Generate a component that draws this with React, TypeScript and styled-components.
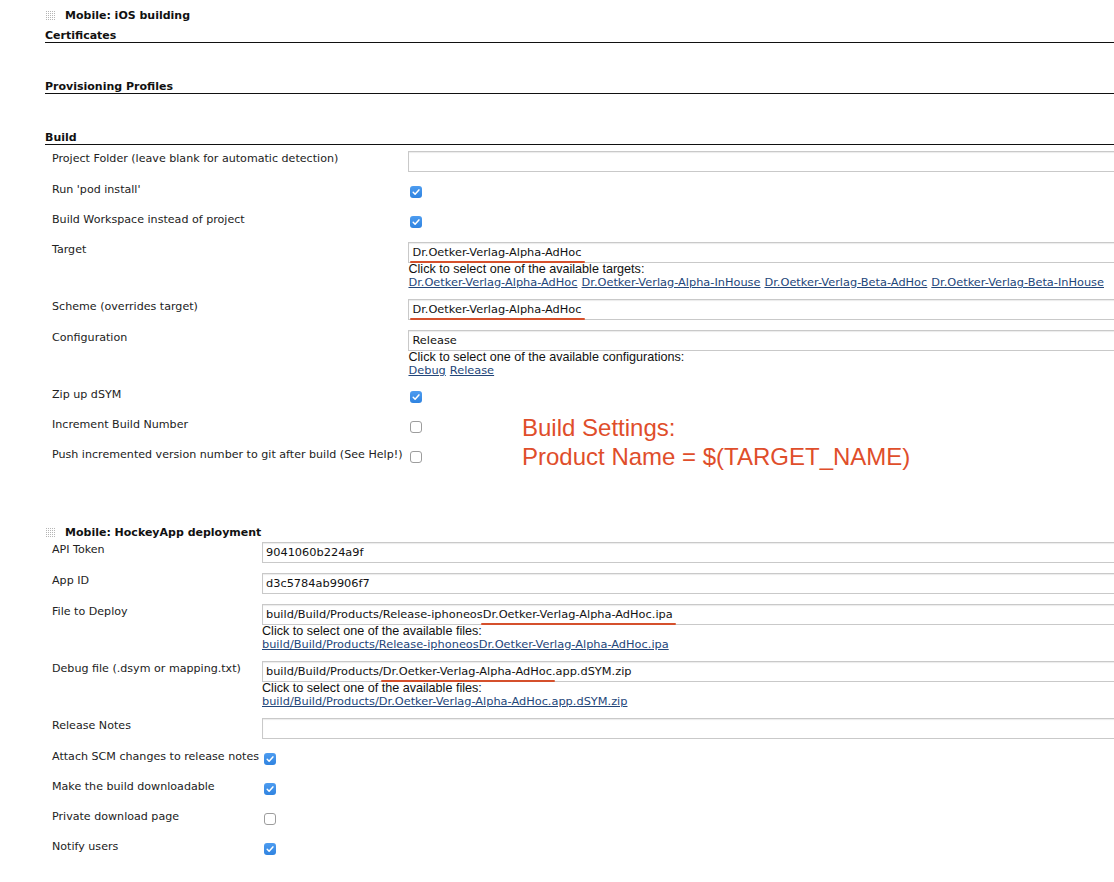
import React from "react";
import styled, { createGlobalStyle } from "styled-components";

const Global = createGlobalStyle`
  html, body { margin: 0; padding: 0; background: #fff; }
  body { overflow: hidden; font-family: "DejaVu Sans", Verdana, sans-serif; color: #222; }
`;

const Page = styled.div`
  position: relative;
  width: 1114px;
  height: 882px;
  overflow: hidden;
  padding: 7px 0 0 45px;
  box-sizing: border-box;
`;

const Section = styled.section<{ $top?: number }>`
  margin-top: ${(p) => p.$top ?? 0}px;
`;

const SectionHeader = styled.div<{ $overlap?: number }>`
  display: flex;
  align-items: center;
  gap: 9px;
  height: 16px;
  margin-bottom: ${(p) => -(p.$overlap ?? 0)}px;
  font-size: 11px;
  font-weight: bold;
  color: #111;
`;

const Grip = styled.svg`
  width: 11px;
  height: 11px;
  flex: none;
`;

const SubHeader = styled.div<{ $gap: number }>`
  margin-top: ${(p) => p.$gap}px;
  height: 13px;
  line-height: 14px;
  font-size: 11px;
  font-weight: bold;
  color: #111;
  border-bottom: 1px solid #111;
`;

const FormGrid = styled.div<{ $gap: number }>`
  display: grid;
  grid-template-columns: max-content 1fr;
  column-gap: ${(p) => p.$gap}px;
  padding-left: 7px;
  margin-top: 1px;
`;

const Label = styled.div`
  padding: 6px 0 10px;
  line-height: 14px;
  font-size: 11.1px;
  color: #222;
  white-space: nowrap;
`;

const Field = styled.div<{ $check?: boolean }>`
  padding: ${(p) => (p.$check ? "9px 0 9px 2px" : "5px 0")};
  min-width: 0;
`;

const TextBox = styled.div`
  box-sizing: border-box;
  width: calc(100% + 20px);
  height: 21px;
  padding: 0 3px;
  line-height: 19px;
  border: 1px solid #c9c9c9;
  box-shadow: inset 0 1px 1px rgba(0, 0, 0, 0.08);
  background: #fff;
  font-size: 11.35px;
  color: #111;
  white-space: nowrap;
`;

const Marked = styled.span`
  position: relative;
  &::after {
    content: "";
    position: absolute;
    left: -2px;
    right: -3px;
    bottom: -4px;
    height: 2px;
    border-radius: 1px;
    background: #d5502c;
  }
`;

const Helper = styled.div`
  font-family: "Liberation Sans", Arial, sans-serif;
  font-size: 12.6px;
  line-height: 13px;
  color: #111;
  white-space: nowrap;
`;

const Links = styled.div`
  display: flex;
  gap: 4px;
  font-size: 11.35px;
  line-height: 13px;
  white-space: nowrap;
`;

const Link = styled.a`
  color: #23467a;
  text-decoration: underline;
  cursor: pointer;
`;

const Box = styled.span<{ $on: boolean }>`
  display: block;
  box-sizing: border-box;
  width: 12px;
  height: 12px;
  border-radius: 3px;
  background: ${(p) => (p.$on ? "linear-gradient(#4d9cf0, #2f83e0)" : "#fff")};
  border: ${(p) => (p.$on ? "none" : "1px solid #9d9d9d")};
  position: relative;
`;

const Note = styled.div`
  position: absolute;
  left: 522px;
  top: 413px;
  font-family: "Liberation Sans", Arial, sans-serif;
  font-size: 24px;
  line-height: 29px;
  color: #df4e2b;
  white-space: nowrap;
`;

const GripIcon = () => (
  <Grip viewBox="0 0 11 11" shapeRendering="crispEdges">
    {Array.from({ length: 25 }).map((_, i) => (
      <rect key={i} x={(i % 5) * 2 + 1} y={Math.floor(i / 5) * 2 + 1} width="1" height="1" fill="#b5b5b5" />
    ))}
  </Grip>
);

const Check = ({ on }: { on: boolean }) => (
  <Box $on={on}>
    {on && (
      <svg width="12" height="12" viewBox="0 0 12 12" style={{ position: "absolute", left: 0, top: 0 }}>
        <path d="M3.2 6.3 L5.1 8.2 L8.9 3.9" fill="none" stroke="#fff" strokeWidth="1.5" strokeLinecap="round" strokeLinejoin="round" />
      </svg>
    )}
  </Box>
);

const CheckRow = ({ label, on }: { label: string; on: boolean }) => (
  <>
    <Label>{label}</Label>
    <Field $check>
      <Check on={on} />
    </Field>
  </>
);

const TEXT_ROW = (label: string, value: React.ReactNode, extra?: React.ReactNode) => (
  <>
    <Label>{label}</Label>
    <Field>
      <TextBox>{value}</TextBox>
      {extra}
    </Field>
  </>
);

const AD = "Dr.Oetker-Verlag-Alpha-AdHoc";

export default function App() {
  return (
    <Page>
      <Global />
      <Section>
        <SectionHeader>
          <GripIcon />
          <span>Mobile: iOS building</span>
        </SectionHeader>
        <SubHeader $gap={6}>Certificates</SubHeader>
        <SubHeader $gap={37}>Provisioning Profiles</SubHeader>
        <SubHeader $gap={37}>Build</SubHeader>
        <FormGrid $gap={6}>
          {TEXT_ROW("Project Folder (leave blank for automatic detection)", "")}
          <CheckRow label="Run 'pod install'" on />
          <CheckRow label="Build Workspace instead of project" on />
          {TEXT_ROW(
            "Target",
            <Marked>{AD}</Marked>,
            <>
              <Helper>Click to select one of the available targets:</Helper>
              <Links>
                <Link>Dr.Oetker-Verlag-Alpha-AdHoc</Link>
                <Link>Dr.Oetker-Verlag-Alpha-InHouse</Link>
                <Link>Dr.Oetker-Verlag-Beta-AdHoc</Link>
                <Link>Dr.Oetker-Verlag-Beta-InHouse</Link>
              </Links>
            </>
          )}
          {TEXT_ROW("Scheme (overrides target)", <Marked>{AD}</Marked>)}
          {TEXT_ROW(
            "Configuration",
            "Release",
            <>
              <Helper>Click to select one of the available configurations:</Helper>
              <Links>
                <Link>Debug</Link>
                <Link>Release</Link>
              </Links>
            </>
          )}
          <CheckRow label="Zip up dSYM" on />
          <CheckRow label="Increment Build Number" on={false} />
          <CheckRow label="Push incremented version number to git after build (See Help!)" on={false} />
        </FormGrid>
      </Section>

      <Note>
        Build Settings:
        <br />
        Product Name = $(TARGET_NAME)
      </Note>

      <Section $top={52}>
        <SectionHeader $overlap={4}>
          <GripIcon />
          <span>Mobile: HockeyApp deployment</span>
        </SectionHeader>
        <FormGrid $gap={3}>
          {TEXT_ROW("API Token", "9041060b224a9f")}
          {TEXT_ROW("App ID", "d3c5784ab9906f7")}
          {TEXT_ROW(
            "File to Deploy",
            <>
              build/Build/Products/Release-iphoneos<Marked>{AD}.ipa</Marked>
            </>,
            <>
              <Helper>Click to select one of the available files:</Helper>
              <Links>
                <Link>build/Build/Products/Release-iphoneosDr.Oetker-Verlag-Alpha-AdHoc.ipa</Link>
              </Links>
            </>
          )}
          {TEXT_ROW(
            "Debug file (.dsym or mapping.txt)",
            <>
              build/Build/Products/<Marked>{AD}</Marked>.app.dSYM.zip
            </>,
            <>
              <Helper>Click to select one of the available files:</Helper>
              <Links>
                <Link>build/Build/Products/Dr.Oetker-Verlag-Alpha-AdHoc.app.dSYM.zip</Link>
              </Links>
            </>
          )}
          {TEXT_ROW("Release Notes", "")}
          <CheckRow label="Attach SCM changes to release notes" on />
          <CheckRow label="Make the build downloadable" on />
          <CheckRow label="Private download page" on={false} />
          <CheckRow label="Notify users" on />
        </FormGrid>
      </Section>
    </Page>
  );
}
